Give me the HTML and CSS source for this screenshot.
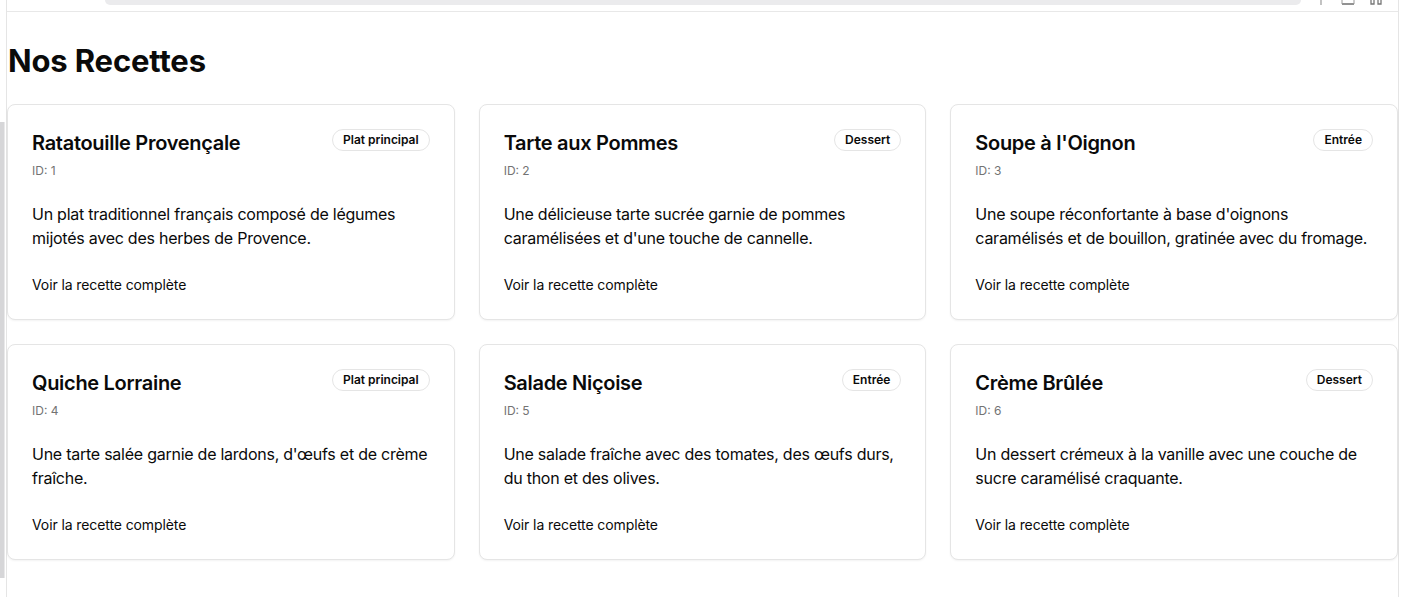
FILE: index.html
```html
<!DOCTYPE html>
<html lang="fr">
<head>
<meta charset="utf-8">
<title>Nos Recettes</title>
<link rel="stylesheet" href="styles.css">
</head>
<body>
<div class="shell">
  <div class="rail"><div class="rail-thumb"></div></div>
  <div class="frame">
    <div class="toolbar">
      <div class="address"></div>
      <div class="tool-icons">
        <svg class="ti" width="12" height="6" viewBox="0 0 12 6"><path d="M6 0v5" stroke="#9a9a9a" stroke-width="1.2" fill="none"/></svg>
        <svg class="ti" width="14" height="6" viewBox="0 0 14 6"><path d="M1 4h12" stroke="#777" stroke-width="1.6" fill="none"/><path d="M1 0v4M13 0v4" stroke="#9a9a9a" stroke-width="1" fill="none"/></svg>
        <svg class="ti" width="14" height="6" viewBox="0 0 14 6"><path d="M2 0v4h3V0M9 0v4h3V0" stroke="#777" stroke-width="1.3" fill="none"/></svg>
      </div>
    </div>
    <main class="content">
      <h1 class="page-title">Nos Recettes</h1>
      <div class="grid">
        <article class="card">
          <div class="card-head">
            <div class="head-row">
              <h2 class="card-title">Ratatouille Provençale</h2>
              <span class="badge">Plat principal</span>
            </div>
            <p class="card-id">ID: 1</p>
          </div>
          <p class="card-desc">Un plat traditionnel français composé de légumes mijotés avec des herbes de Provence.</p>
          <a class="card-link" href="#">Voir la recette complète</a>
        </article>
        <article class="card">
          <div class="card-head">
            <div class="head-row">
              <h2 class="card-title">Tarte aux Pommes</h2>
              <span class="badge">Dessert</span>
            </div>
            <p class="card-id">ID: 2</p>
          </div>
          <p class="card-desc">Une délicieuse tarte sucrée garnie de pommes caramélisées et d'une touche de cannelle.</p>
          <a class="card-link" href="#">Voir la recette complète</a>
        </article>
        <article class="card">
          <div class="card-head">
            <div class="head-row">
              <h2 class="card-title">Soupe à l'Oignon</h2>
              <span class="badge">Entrée</span>
            </div>
            <p class="card-id">ID: 3</p>
          </div>
          <p class="card-desc">Une soupe réconfortante à base d'oignons caramélisés et de bouillon, gratinée avec du fromage.</p>
          <a class="card-link" href="#">Voir la recette complète</a>
        </article>
        <article class="card">
          <div class="card-head">
            <div class="head-row">
              <h2 class="card-title">Quiche Lorraine</h2>
              <span class="badge">Plat principal</span>
            </div>
            <p class="card-id">ID: 4</p>
          </div>
          <p class="card-desc">Une tarte salée garnie de lardons, d'œufs et de crème fraîche.</p>
          <a class="card-link" href="#">Voir la recette complète</a>
        </article>
        <article class="card">
          <div class="card-head">
            <div class="head-row">
              <h2 class="card-title">Salade Niçoise</h2>
              <span class="badge">Entrée</span>
            </div>
            <p class="card-id">ID: 5</p>
          </div>
          <p class="card-desc">Une salade fraîche avec des tomates, des œufs durs, du thon et des olives.</p>
          <a class="card-link" href="#">Voir la recette complète</a>
        </article>
        <article class="card">
          <div class="card-head">
            <div class="head-row">
              <h2 class="card-title">Crème Brûlée</h2>
              <span class="badge">Dessert</span>
            </div>
            <p class="card-id">ID: 6</p>
          </div>
          <p class="card-desc">Un dessert crémeux à la vanille avec une couche de sucre caramélisé craquante.</p>
          <a class="card-link" href="#">Voir la recette complète</a>
        </article>
      </div>
    </main>
  </div>
</div>
</body>
</html>
```

FILE: styles.css
```css
* { box-sizing: border-box; }
html, body { margin: 0; padding: 0; background: #ffffff; }
body {
  font-family: Inter, "Liberation Sans", sans-serif;
  color: #0a0a0a;
  height: 597px;
  overflow: hidden;
}
.shell {
  display: flex;
  height: 597px;
}
.rail {
  width: 6px;
  flex: none;
  padding-top: 122px;
}
.rail-thumb {
  width: 5px;
  height: 456px;
  background: #d6d6d8;
  border-right: 1px solid #e9e9ea;
}
.frame {
  width: 1393px;
  flex: none;
  border-left: 1px solid #e5e5e5;
  border-right: 1px solid #e5e5e5;
  display: flex;
  flex-direction: column;
}
.toolbar {
  height: 12px;
  border-bottom: 1px solid #e8e8e8;
  display: flex;
  align-items: flex-start;
  padding-left: 98px;
}
.address {
  width: 1196px;
  height: 5px;
  background: #ebebed;
  border-radius: 0 0 10px 10px;
}
.tool-icons {
  display: flex;
  gap: 14px;
  padding-left: 14px;
}
.ti { display: block; }
.content {
  padding-top: 31px;
}
.page-title {
  margin: 0 0 25px 0;
  font-size: 31px;
  line-height: 36px;
  font-weight: 700;
  letter-spacing: -0.15px;
  padding-left: 1px;
}
.grid {
  display: grid;
  grid-template-columns: repeat(3, 1fr);
  gap: 24px;
}
.card {
  border: 1px solid #e5e5e5;
  border-radius: 8px;
  background: #fff;
  box-shadow: 0 1px 2px rgba(0,0,0,0.05);
  height: 216px;
  padding: 24px 24px 0 24px;
  display: flex;
  flex-direction: column;
}
.card-head {
  display: flex;
  flex-direction: column;
  gap: 6px;
}
.head-row {
  display: flex;
  justify-content: space-between;
  align-items: flex-start;
}
.card-title {
  margin: 0;
  font-size: 20px;
  line-height: 28px;
  font-weight: 600;
  letter-spacing: -0.3px;
}
.badge {
  border: 1px solid #e5e5e5;
  border-radius: 999px;
  padding: 2px 10px;
  font-size: 12px;
  line-height: 16px;
  font-weight: 600;
  white-space: nowrap;
}
.card-id {
  margin: 0;
  font-size: 12px;
  line-height: 16px;
  color: #737373;
}
.card-desc {
  margin: 23px 0 0 0;
  font-size: 16px;
  line-height: 24px;
  letter-spacing: -0.25px;
}
.card-link {
  margin-top: 25px;
  font-size: 14px;
  line-height: 20px;
  letter-spacing: -0.1px;
  color: #0a0a0a;
  text-decoration: none;
}
```
